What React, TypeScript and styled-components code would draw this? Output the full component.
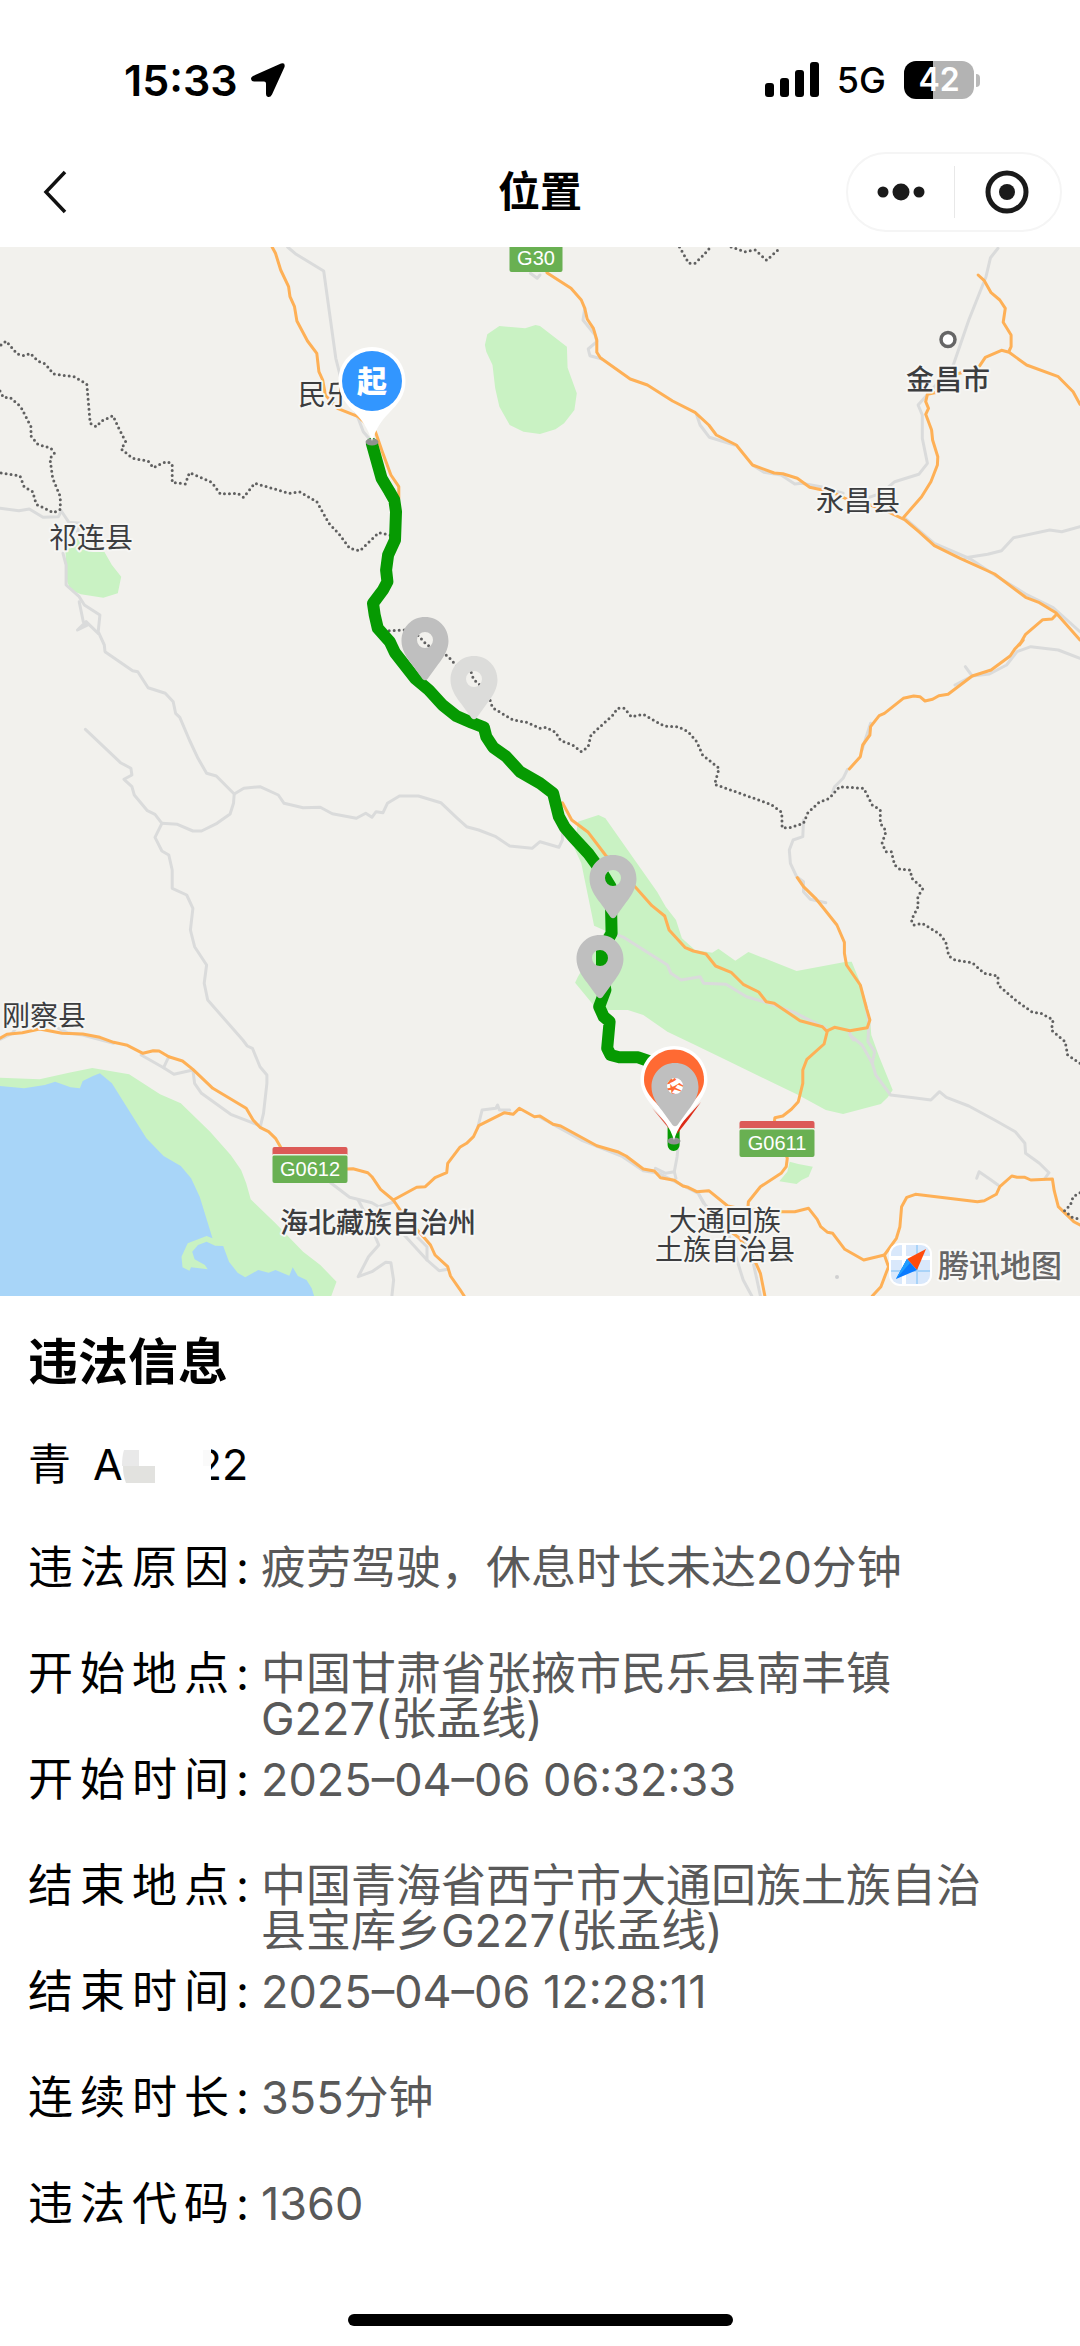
import React from "react";
import styled, { createGlobalStyle } from "styled-components";

const SANS = `Inter, "Noto Sans CJK SC", sans-serif`;
const MAP_SANS = `"Liberation Sans", "Noto Sans CJK SC", sans-serif`;

const GlobalStyle = createGlobalStyle`
  * { box-sizing: border-box; }
  body {
    margin: 0;
    background: #fff;
    color: #000;
    font-family: ${SANS};
  }
`;

/* ---------- Map geometry ---------- */

// Every map sheet has its own grid; points are listed as "SHEET x,y x,y ...".
const SHEETS: Record<string, [number, number]> = {
  A: [0, -2],
  B: [540, -2],
  C: [0, 393],
  D: [540, 393],
  E: [0, 733],
  F: [540, 733],
};

function plot(source: string): string {
  let origin = SHEETS.A;
  let d = "";
  for (const token of source.trim().split(/\s+/)) {
    if (SHEETS[token]) {
      origin = SHEETS[token];
      continue;
    }
    const [x, y] = token.split(",").map(Number);
    const px = (origin[0] + (x * 540) / 1568).toFixed(1);
    const py = (origin[1] + y / 3).toFixed(1);
    d += `${d ? "L" : "M"}${px} ${py}`;
  }
  return d;
}

const PARKS = [
  "A 1408,300 1415,268 1450,243 1525,250 1555,240 B 0,243 78,305 80,368 107,445 100,495 70,535 45,553 0,567 A 1520,560 1480,540 1450,485 1438,430 1430,360 1412,320",
  "A 225,880 245,915 303,920 325,960 352,995 342,1045 300,1058 235,1048 205,1035 195,1010 190,915",
  "D 110,545 170,525 190,535 275,660 340,755 365,800 395,840 412,895 450,930 500,938 518,926 567,962 605,936 745,993 885,966 905,965 935,1040 958,1130 962,1185 F 985,230 1024,330 1010,352 990,372 880,402 830,390 750,345 640,290 530,235 440,190 370,155 300,105 255,90 190,90 D 155,1095 102,1028 110,1010 190,872 157,857 120,670 100,625",
  "F 725,545 750,552 792,560 780,590 760,600 745,612 695,604 718,575",
  "E 0,293 115,298 200,278 268,264 375,283 465,343 525,370 610,455 670,525 700,570 715,610 728,658 800,730 880,815 930,855 977,905 962,948 0,948",
];

const LAKE =
  "E 0,318 70,325 130,315 160,305 205,322 232,325 240,303 270,288 290,280 325,310 425,475 475,528 525,558 555,595 580,650 617,775 600,768 545,790 527,830 530,862 550,872 555,862 603,868 595,855 565,838 558,815 575,795 600,785 625,797 648,798 665,845 690,878 712,892 750,870 780,878 800,870 840,887 850,862 865,888 890,900 905,925 912,948 0,948";

const MINOR_ROADS = [
  "A 835,6 860,28 940,78 975,340 990,400 1040,520 1055,560 1080,590",
  "A 1540,85 1560,100 1568,90",
  "A 0,790 55,797 85,792 125,817 170,815 178,798 200,832 235,835 225,860",
  "A 183,925 192,960 192,1020 230,1055 245,1080 290,1110 285,1160 303,1200 C 305,35 385,92 400,95 430,143 480,160 503,185 510,220 522,232 550,300 575,355 600,400 628,408 680,462 678,490 668,522 630,550 585,573 560,573 515,553 470,550",
  "A 230,1070 242,1130 255,1140 225,1155 250,1130 285,1165",
  "C 680,462 708,445 755,440 808,465 825,490 880,503 930,502 965,521 1035,535 1062,520 1080,532 1092,515 1112,518 1125,490 1160,468 1215,468 1280,488 1325,532 1355,560 1390,570 1440,590 1480,618 1545,625 1568,605 D 55,622 65,600 65,570",
  "C 248,268 350,368 380,385 383,405 360,418 383,440 390,465 428,512 450,523 470,550 450,592 470,633 490,645 500,690 500,745 542,765 560,805 553,870 565,920 600,975 593,1030 603,1080 705,1200 E 718,198 733,205 755,260 775,285 775,310 765,400 757,435",
  "B 130,190 125,225 160,270 165,290 140,312 145,332 180,342",
  "B 455,510 465,540 492,577 565,600",
  "B 620,662 650,682 700,690 740,717 760,715 815,725 880,745",
  "B 1330,10 1308,38 1295,95 1245,225 1200,360 1150,420 1098,480 1110,510 1110,580 1125,655 1100,688 1030,710 990,745 955,757",
  "B 1235,938 1300,928 1340,917 1375,878 1480,855 1515,860 1568,845",
  "B 1060,820 1145,895 1250,942 1320,990 1410,1047 1490,1088 1568,1160",
  "D 1568,55 1505,30 1425,20 1385,35 1355,75 1305,102 1255,108 1205,135",
  "D 1235,80 1255,108",
  "D 960,250 935,330",
  "D 893,388 880,415 855,440 850,455",
  "D 765,540 763,590 735,600 724,630 727,670 745,710 765,725 765,755 785,778 830,788",
  "D 225,885 245,893 370,975 380,1000 410,1020 465,1010 475,1030 540,1033 600,1070 660,1088 740,1118 830,1165",
  "D 895,1170 910,1200 F 900,165 935,195 965,250 975,285 1018,345 1085,353 1135,360 1160,335 1180,352 1245,378 1320,420 1380,455 1408,490 1410,520 1450,550 1478,578 1465,597",
  "F 945,70 955,130 952,185 972,215 965,250",
  "F 1268,595 1275,575 1310,600 1330,615",
  "F 400,508 398,530 390,575 395,595",
  "F 335,565 365,580 390,575",
  "F 0,412 120,480 240,530 300,572 345,580 460,640 475,670",
  "F 462,645 480,675 540,740 575,850 590,900 615,948",
  "F 585,770 615,830 630,900 640,948",
  "E 410,225 475,263 505,283 560,270 565,310 585,340 670,403 757,438",
  "E 490,230 475,263",
  "E 170,145 195,158 240,165 330,190",
  "E 0,178 35,160 50,140",
  "E 960,608 1015,652 1080,668 1100,680 1145,665",
  "E 1040,660 1060,700 1100,795 1070,830 1040,890 1080,875 1120,847 1135,848 1143,900 1138,948",
  "E 1165,755 1240,840 1275,872 1300,868",
  "E 1200,760 1240,800 1240,840",
  "E 1388,440 1400,390 1440,385 1445,375 1450,390 1480,390",
];

const MAJOR_ROADS = [
  "A 790,6 800,25 815,75 838,125 842,155 855,185 862,228 893,288 920,325 926,380 937,405 945,450 980,490 1040,515 1090,560 1110,620 1135,690 1158,725 1158,760",
  "B 20,83 90,130 120,165 130,190 137,222 155,250 165,285 165,322 175,338 262,402 312,420 385,468 450,502 490,540 512,570 570,600 617,660 680,684 705,686 747,700 783,727 850,742 890,762 960,780 1010,800 1060,825 1100,860 1145,902 1220,940 1320,987 1410,1057 1450,1073 1498,1103 1568,1185",
  "B 1272,90 1290,107 1310,143 1335,165 1351,190 1345,232 1368,270 1368,305 1362,318",
  "B 1568,478 1548,440 1505,395 1413,360 1362,322 1340,316 1293,337 1275,365 1230,382 1195,390 1160,440 1125,448 1120,470 1128,490 1120,508 1137,555 1140,585 1155,635 1154,660 1135,710 1108,755 1055,818",
  "B 1498,1110 1487,1122 1460,1124 1410,1168 1392,1200 D 1403,0 1378,28 1365,48 1310,90 1255,108 1185,163 1158,167 1140,178 1118,183 1103,170 1085,168 1055,175 1000,220 985,227 960,260 958,285 937,315 930,350 898,387",
  "D 747,713 765,740 800,775 820,800 862,855 884,907 884,940 890,975 930,1035 948,1105 958,1140 950,1163 900,1172 855,1162 835,1172",
  "D 65,488 92,540 140,577 190,645 280,745 325,797 362,828 375,870 422,923 445,933 482,942 510,978 555,997 590,1033 635,1056 657,1085 680,1090 755,1142 820,1160 834,1175 F 825,192 775,238 763,270 763,310 750,365 730,388 705,408 682,413 680,430 718,535 715,560 700,580 640,620 605,665 603,690",
  "E 0,175 20,163 65,158 115,147 180,160 240,162 290,172 330,187 370,196 415,220 445,212 462,213 490,230 530,243 560,268 618,325 715,385 735,420 755,442 780,455 800,475 815,502",
  "E 1005,567 1025,566 1068,578 1080,590 1105,628 1142,660 1175,710 1225,765 1250,795 1263,825 1300,860 1308,888 1335,928 1348,948",
  "E 1142,660 1210,622 1235,620 1263,593 1297,578 1300,550 1335,502 1355,490 1375,470 1390,437 1465,398 1490,403 1508,385 1552,410 F 0,408 38,433 60,438 165,497 225,515 250,528 300,567 332,573 350,593 390,601 415,618 430,622 455,635 490,632 545,678 600,690 700,695 740,695 780,685 805,718 815,740 835,757 850,760 885,808 940,840 1000,825 1035,775 1045,740 1050,680 1065,652 1090,643 1270,665 1290,662 1325,643 1335,620 1370,588 1385,592 1408,592 1425,600 1488,597 1493,632 1505,680 1550,725 1568,735",
  "F 1000,825 1012,860 990,920 965,948",
  "F 540,745 580,775 625,845 640,880 653,948",
];

const BORDERS = [
  "A 3,300 18,288 50,327 70,332 88,325 110,348 132,357 155,387 215,395 252,417 262,535 280,545 295,528 328,512 345,550 365,590 352,612 385,640 430,648 445,668 470,655 485,650 500,657 500,712 538,717 550,683 615,712 640,747 690,745 707,757 740,715 840,745 870,740 920,770 955,835 985,868 1015,910 1045,917 1100,863 1140,872",
  "A 0,438 10,457 30,458 60,485 90,545 90,573 110,598 148,610 158,625 145,640 153,700 175,755 175,793 155,803 105,778 95,740 70,725 58,693 0,683",
  "A 1130,1157 1180,1155 1215,1172 1240,1200 C 1300,48 1330,82 1362,78 1375,118 1415,155 1430,203 1490,240 1530,247 1568,265 D 18,262 45,277 60,302 95,315 120,335 140,320 148,285 180,255 212,225 225,205 245,205 265,230 300,223 360,258 400,260 430,275 455,305 472,345 520,385 507,433 600,467 670,493 702,517 703,563 725,563 765,550 778,518 810,487 840,475 870,440 940,445 965,495 988,510 988,550 1005,573 993,610 1005,635 1020,635 1030,675 1045,688 1075,690 1080,715 1112,745 1097,770 1098,800 1078,840 1085,855 1110,850 1160,882 1178,905 1187,948 1205,960 1255,968 1290,1000 1330,1008 1330,1035 1380,1080 1430,1117 1455,1120 1490,1140 1485,1170 1525,1205 F 1532,225 1568,250",
  "B 405,6 432,55 450,55 475,30 495,6",
  "B 555,6 595,20 625,15 658,46 698,8",
  "F 1568,638 1548,650 1540,675 1523,692 1545,712 1568,718",
];

const ROUTE =
  "A 1080,596 1108,700 1130,738 1145,765 1150,800 1147,885 1127,930 1121,975 1125,1010 1112,1035 1083,1075 1088,1110 1097,1150 1132,1190 C 1147,38 1205,115 1245,150 1285,195 1325,228 1370,248 1405,262 1412,290 1432,322 1470,350 1510,395 D 0,430 38,460 55,530 72,562 95,590 140,640 175,690 205,740 208,880 180,930 180,990 190,1050 172,1100 185,1130 202,1145 F 195,205 205,225 230,232 285,232 315,243 388,300 388,495";

type Point = { x: number; y: number };

const GREY_PINS: (Point & { faded?: boolean })[] = [
  { x: 474, y: 409, faded: true },
  { x: 425, y: 370 },
  { x: 613, y: 608 },
  { x: 600, y: 688 },
  { x: 675, y: 816 },
];

const LABELS: (Point & { text: string; bold?: boolean })[] = [
  { x: 91, y: 301, text: "祁连县" },
  { x: 340, y: 158, text: "民乐县" },
  { x: 948, y: 143, text: "金昌市", bold: true },
  { x: 858, y: 264, text: "永昌县" },
  { x: 44, y: 779, text: "刚察县" },
  { x: 378, y: 986, text: "海北藏族自治州", bold: true },
  { x: 725, y: 984, text: "大通回族" },
  { x: 725, y: 1013, text: "土族自治县" },
];

/* ---------- Map parts ---------- */

const MapCanvas = styled.svg`
  display: block;
  width: 100%;
  height: auto;
  background: #f2f1ed;
  font-family: ${MAP_SANS};
`;

const Line = styled.path<{ $color: string; $width: number }>`
  fill: none;
  stroke: ${(p) => p.$color};
  stroke-width: ${(p) => p.$width}px;
  stroke-linecap: round;
  stroke-linejoin: round;
`;

const BorderLine = styled(Line)`
  stroke-dasharray: 0 5;
`;

const PlaceName = styled.text<{ $bold?: boolean }>`
  font-size: 28px;
  font-weight: ${(p) => (p.$bold ? 500 : 400)};
  fill: #3c3d3f;
  stroke: #f6f6f4;
  stroke-width: 4px;
  stroke-linejoin: round;
  paint-order: stroke;
  text-anchor: middle;
`;

const ShieldText = styled.text`
  font-size: 20px;
  fill: #fff;
  text-anchor: middle;
`;

const PinText = styled.text`
  font-size: 30px;
  font-weight: 900;
  fill: #fff;
  text-anchor: middle;
`;

const ProviderText = styled.text`
  font-size: 31px;
  font-weight: 500;
  fill: #666;
  stroke: #f8f8f6;
  stroke-width: 4px;
  stroke-linejoin: round;
  paint-order: stroke;
`;

function RoadShield({ x, y, text, national = true }: Point & { text: string; national?: boolean }) {
  const width = national ? 75 : 53;
  return (
    <g transform={`translate(${x - width / 2} ${y})`}>
      <rect y={national ? 8 : 0} width={width} height="28" rx="2" fill="#69b052" />
      {national && <path d={`M0 8V2a2 2 0 0 1 2-2h${width - 4}a2 2 0 0 1 2 2v6z`} fill="#dc5a57" />}
      {national && <rect y="7" width={width} height="1.5" fill="#e9efe0" />}
      <ShieldText x={width / 2} y={national ? 29 : 21}>{text}</ShieldText>
    </g>
  );
}

function GreyPin({ x, y, faded }: Point & { faded?: boolean }) {
  return (
    <path
      transform={`translate(${x} ${y})`}
      fill={faded ? "#dcdcda" : "#bfbfbf"}
      fillRule="evenodd"
      d="M0 0C13.500 0 23.500 10.500 23.500 24C23.500 32 19 40 13 47.500L2.500 62Q0 64.500 -2.500 62L-13 47.500C-19 40 -23.500 32 -23.500 24C-23.500 10.500 -13.500 0 0 0ZM0 15a8 8 0 1 0 0 16a8 8 0 1 0 0-16Z"
    />
  );
}

const TEARDROP =
  "M0 -34C19 -34 33.500 -19 33.500 0C33.500 14 26 23 17 32C9 40 4 48 0 60C-4 48 -9 40 -17 32C-26 23 -33.500 14 -33.500 0C-33.500 -19 -19 -34 0 -34Z";

function ViolationMap() {
  return (
    <MapCanvas viewBox="0 0 1080 1049" role="img" aria-label="行驶路线地图">
      {PARKS.map((d) => (
        <path key={d} d={`${plot(d)}Z`} fill="#c9f2c3" />
      ))}
      <path d={`${plot(LAKE)}Z`} fill="#a8d5f8" />
      {MINOR_ROADS.map((d) => (
        <Line key={d} d={plot(d)} $color="#dadbdb" $width={3} />
      ))}
      {MAJOR_ROADS.map((d) => (
        <Line key={d} d={plot(d)} $color="#feb056" $width={3} />
      ))}
      {BORDERS.map((d) => (
        <BorderLine key={d} d={plot(d)} $color="#606060" $width={3} />
      ))}
      <circle cx="948" cy="92.500" r="7" fill="#fff" stroke="#666" strokeWidth="3.500" />
      <circle cx="837" cy="1030" r="2" fill="#d0d0d0" />
      {LABELS.map((l) => (
        <PlaceName key={l.text} x={l.x} y={l.y} $bold={l.bold}>
          {l.text}
        </PlaceName>
      ))}
      <RoadShield x={536} y={-3} text="G30" national={false} />
      <RoadShield x={310} y={900} text="G0612" />
      <RoadShield x={777} y={874} text="G0611" />
      <Line d={plot(ROUTE)} $color="#069a02" $width={12} />

      <g transform="translate(372 134)">
        <ellipse cy="61" rx="6.500" ry="3.500" fill="#8f9290" />
        <path d={TEARDROP} fill="#fff" />
        <circle r="30" fill="#3296ff" />
        <PinText y="11">起</PinText>
      </g>

      {GREY_PINS.slice(0, 4).map((p) => (
        <GreyPin key={`${p.x}-${p.y}`} {...p} />
      ))}

      <g transform="translate(674 833)">
        <ellipse cy="61" rx="6.500" ry="3.500" fill="#8f9290" />
        <path d="M27 22L4 47L3 54L14 40Z" fill="#dd2b17" />
        <path d="M-22 28L-4 50L-5 46Z" fill="#e0604f" />
        <path d="M0 -34C19 -34 33.500 -19 33.500 0C33.500 12 25 22 19 29C10 40 4 47 0 60C-4 47 -10 40 -19 29C-25 22 -33.500 12 -33.500 0C-33.500 -19 -19 -34 0 -34Z" fill="#fff" />
        <path d="M0 -30.500C17 -30.500 30 -17 30 0C30 12 20 22 0 40C-20 22 -30 12 -30 0C-30 -17 -17 -30.500 0 -30.500Z" fill="#ff6a33" />
        <PinText y="14">终</PinText>
      </g>
      <GreyPin {...GREY_PINS[4]} />

      <g transform="translate(890 997)">
        <rect x="-1" y="-1" width="43" height="43" rx="11" fill="#fff" />
        <rect x="1" y="1" width="39" height="39" rx="9" fill="#d9e8fb" />
        <path d="M14 0V41M0 14H41" stroke="#fff" strokeWidth="4" />
        <path d="M27 1V40M1 27H40" stroke="#a9d3f8" strokeWidth="2" />
        <path d="M36 5L17 15L27 26Z" fill="#ff4b0d" />
        <path d="M17 15L6 35L20 22Z" fill="#1f9dff" />
        <path d="M6 35L27 26L17 15Z" fill="#0a7bff" />
        <path d="M6 35L17 15L20 19Z" fill="#1f9dff" />
      </g>
      <ProviderText x="938" y="1030">腾讯地图</ProviderText>
    </MapCanvas>
  );
}

/* ---------- Screen chrome ---------- */

const Screen = styled.main`
  display: flex;
  flex-direction: column;
  min-height: 100vh;
  background: #fff;
`;

const StatusBar = styled.div`
  display: flex;
  align-items: center;
  justify-content: space-between;
  height: 136px;
  padding: 24px 106px 0 124px;
`;

const StatusGroup = styled.div<{ $gap: number }>`
  display: flex;
  align-items: center;
  gap: ${(p) => p.$gap}px;
`;

const Clock = styled.time`
  font-size: 43px;
  font-weight: 600;
  line-height: 48px;
`;

const Network = styled.span`
  font-size: 36px;
  font-weight: 500;
  line-height: 48px;
`;

const Battery = styled.span`
  position: relative;
  display: flex;
  align-items: center;
  justify-content: center;
  width: 70px;
  height: 38px;
  border-radius: 12px;
  background: linear-gradient(90deg, #000 42%, #b3b3b3 42%);
  color: #fff;
  font-size: 32px;
  font-weight: 600;
  line-height: 38px;

  &::after {
    content: "";
    position: absolute;
    left: 72px;
    top: 13px;
    width: 4px;
    height: 13px;
    border-radius: 0 4px 4px 0;
    background: #b9b9b9;
  }
`;

const NavBar = styled.header`
  display: grid;
  grid-template-columns: 1fr auto 1fr;
  align-items: center;
  height: 111px;
  padding: 0 18px;
`;

const BackButton = styled.button`
  justify-self: start;
  display: flex;
  padding: 8px 24px;
  border: 0;
  background: none;
`;

const Title = styled.h1`
  margin: 0;
  font-size: 42px;
  font-weight: 600;
  line-height: 56px;
`;

const Capsule = styled.div`
  justify-self: end;
  display: flex;
  align-items: center;
  width: 216px;
  height: 80px;
  border: 2px solid #f5f5f5;
  border-radius: 40px;
`;

const CapsuleButton = styled.button`
  flex: 1;
  display: flex;
  align-items: center;
  justify-content: center;
  height: 52px;
  padding: 0;
  border: 0;
  background: none;

  & + & {
    border-left: 1px solid #e8e8e8;
  }
`;

/* ---------- Details ---------- */

const Details = styled.section`
  display: flex;
  flex-direction: column;
  padding: 36px 28px 0 28px;
`;

const Heading = styled.h2`
  margin: 0 0 40px;
  font-size: 50px;
  font-weight: 700;
  line-height: 60px;
`;

const Plate = styled.p`
  display: flex;
  align-items: center;
  height: 64px;
  margin: 0 0 49px;
  font-size: 43px;
  line-height: 45px;
`;

const Region = styled.span`
  margin-right: 22px;
`;

const MaskedDigits = styled.svg`
  position: relative;
  flex: none;
  margin: 0 -15px 0 -1px;
`;

const Fields = styled.dl`
  margin: 0;
`;

const Field = styled.div`
  display: flex;
  align-items: flex-start;
  min-height: 106px;
  font-size: 45px;
  line-height: 45px;
`;

const Label = styled.dt`
  flex: none;
  width: 233px;
  white-space: nowrap;
  letter-spacing: 7px;
`;

const Value = styled.dd`
  flex: 1;
  max-width: 740px;
  margin: 0;
  color: #595959;
`;

const HomeArea = styled.footer`
  display: flex;
  justify-content: center;
  margin-top: auto;
  padding-bottom: 20px;
`;

const HomeIndicator = styled.div`
  width: 385px;
  height: 12px;
  border-radius: 6px;
  background: #000;
`;

const FIELDS: [string, React.ReactNode][] = [
  ["违法原因", "疲劳驾驶，休息时长未达20分钟"],
  ["开始地点", <>中国甘肃省张掖市民乐县南丰镇<wbr />G227(张孟线)</>],
  ["开始时间", "2025–04–06 06:32:33"],
  ["结束地点", "中国青海省西宁市大通回族土族自治县宝库乡G227(张孟线)"],
  ["结束时间", "2025–04–06 12:28:11"],
  ["连续时长", "355分钟"],
  ["违法代码", "1360"],
];

export default function App() {
  return (
    <Screen>
      <GlobalStyle />
      <StatusBar>
        <StatusGroup $gap={12}>
          <Clock>15:33</Clock>
          <svg width="36" height="36" viewBox="0 0 36 36" aria-hidden="true">
            <path d="M31 1.500Q35.500 0 34.500 5L22 32.500Q20.500 35.500 18 35Q16 34.500 16 32V21.500Q16 19.500 14 19.500H4Q1.500 19.500 1 17Q.8 15 3 14Z" />
          </svg>
        </StatusGroup>
        <StatusGroup $gap={18}>
          <svg width="54" height="36" viewBox="0 0 54 36" aria-hidden="true">
            <rect x="0" y="21" width="9" height="14" rx="3" />
            <rect x="15" y="16" width="9" height="19" rx="3" />
            <rect x="30" y="8" width="9" height="27" rx="3" />
            <rect x="45" y="0" width="9" height="35" rx="3" />
          </svg>
          <Network>5G</Network>
          <Battery>42</Battery>
        </StatusGroup>
      </StatusBar>

      <NavBar>
        <BackButton type="button" aria-label="返回">
          <svg width="26" height="44" viewBox="0 0 26 44" fill="none" stroke="#111" strokeWidth="3.500">
            <path d="M23 2L4 22L23 42" />
          </svg>
        </BackButton>
        <Title>位置</Title>
        <Capsule>
          <CapsuleButton type="button" aria-label="更多">
            <svg width="50" height="20" viewBox="0 0 50 20" fill="#1a1a1a">
              <circle cx="7" cy="10" r="5.500" />
              <circle cx="25" cy="10" r="8.500" />
              <circle cx="43" cy="10" r="5.500" />
            </svg>
          </CapsuleButton>
          <CapsuleButton type="button" aria-label="关闭">
            <svg width="44" height="44" viewBox="0 0 44 44" fill="#1a1a1a">
              <circle cx="22" cy="22" r="19" fill="none" stroke="#1a1a1a" strokeWidth="5" />
              <circle cx="22" cy="22" r="8" />
            </svg>
          </CapsuleButton>
        </Capsule>
      </NavBar>

      <ViolationMap />

      <Details>
        <Heading>违法信息</Heading>
        <Plate>
          <Region>青</Region>
          <span>A</span>
          <MaskedDigits width="89" height="45" viewBox="0 0 89 45" aria-hidden="true">
            <path d="M4 0H86L89 6V45H0Z" fill="#fff" />
            <path d="M2 8H17V24H0Q0 14 2 8Z" fill="#e9e9e9" />
            <path d="M1 24H33V41H4Q1 34 1 24Z" fill="#e2e2df" />
            <rect x="81" y="8" width="8" height="16" fill="#fafafa" />
          </MaskedDigits>
          <span>22</span>
        </Plate>
        <Fields>
          {FIELDS.map(([label, value]) => (
            <Field key={label}>
              <Label>{label}:</Label>
              <Value>{value}</Value>
            </Field>
          ))}
        </Fields>
      </Details>

      <HomeArea>
        <HomeIndicator />
      </HomeArea>
    </Screen>
  );
}
